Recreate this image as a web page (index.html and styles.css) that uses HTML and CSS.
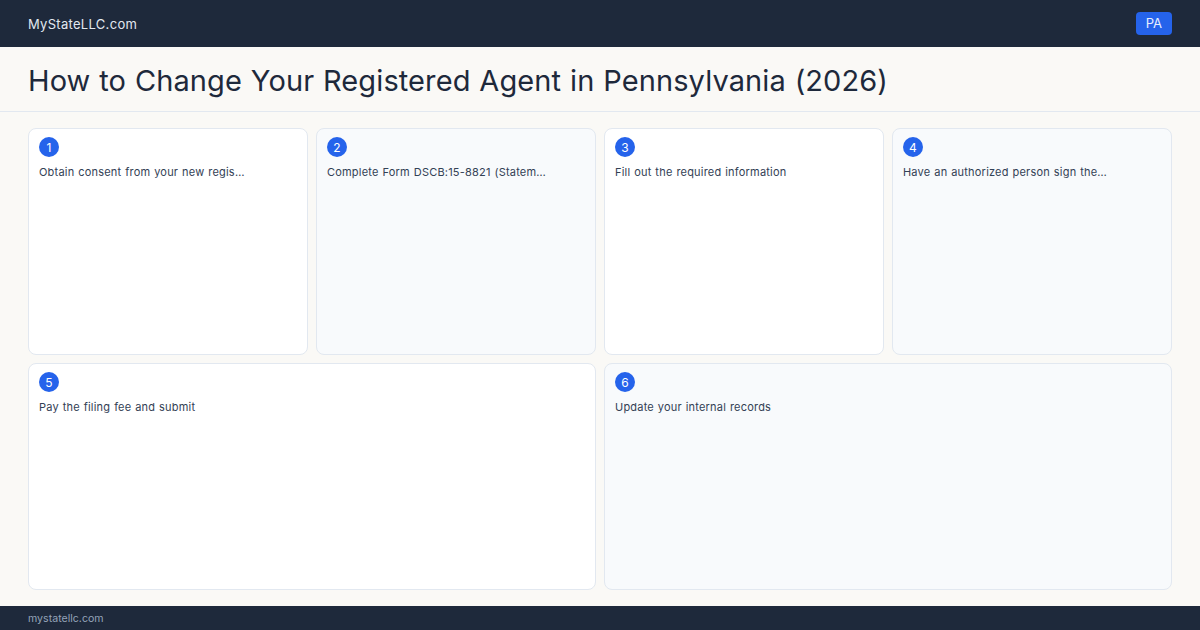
FILE: index.html
```html
<!DOCTYPE html>
<html lang="en">

<head>
    <meta charset="UTF-8">
    <meta name="viewport" content="width=device-width, initial-scale=1.0">
    <title>Change Registered Agent - Pennsylvania</title>
    <link rel="stylesheet" href="styles.css">
</head>

<body>
    <div class="page">
        <header class="topbar">
            <span class="brand">MyStateLLC.com</span>
            <span class="state-badge">PA</span>
        </header>
        <div class="title-bar">
            <h1>How to Change Your Registered Agent in Pennsylvania (2026)</h1>
        </div>
        <main class="steps">
            <div class="step">
                <span class="num">1</span>
                <p>Obtain consent from your new regis…</p>
            </div>
            <div class="step alt">
                <span class="num">2</span>
                <p>Complete Form DSCB:15-8821 (Statem…</p>
            </div>
            <div class="step">
                <span class="num">3</span>
                <p>Fill out the required information</p>
            </div>
            <div class="step alt">
                <span class="num">4</span>
                <p>Have an authorized person sign the…</p>
            </div>
            <div class="step wide">
                <span class="num">5</span>
                <p>Pay the filing fee and submit</p>
            </div>
            <div class="step wide alt">
                <span class="num">6</span>
                <p>Update your internal records</p>
            </div>
        </main>
        <footer class="footer">mystatellc.com</footer>
    </div>
</body>

</html>
```

FILE: styles.css
```css
body {
    margin: 0;
    background-color: #faf9f6;
    font-family: Inter, 'Liberation Sans', sans-serif;
}

.page {
    height: 630px;
    display: flex;
    flex-direction: column;
}

.topbar {
    height: 47px;
    background-color: #1e293b;
    display: flex;
    align-items: center;
    justify-content: space-between;
    padding: 0 28px;
    flex-shrink: 0;
}

.brand {
    color: #e2e8f0;
    font-size: 13px;
    letter-spacing: 0.3px;
}

.state-badge {
    background-color: #2563eb;
    color: #e8efff;
    font-size: 13px;
    border-radius: 4px;
    padding: 4px 10px;
    line-height: 15px;
}

.title-bar {
    height: 65px;
    box-sizing: border-box;
    border-bottom: 1px solid #e2e8f0;
    display: flex;
    align-items: center;
    padding: 2px 28px 0;
    flex-shrink: 0;
}

h1 {
    margin: 0;
    font-size: 29px;
    font-weight: 400;
    color: #1e293b;
    letter-spacing: 0.1px;
    word-spacing: 0.6px;
}

.steps {
    flex-grow: 1;
    display: grid;
    grid-template-columns: repeat(4, 1fr);
    grid-template-rows: 1fr 1fr;
    gap: 8px;
    padding: 16px 28px;
}

.step {
    background-color: #fff;
    border: 1px solid #e2e8f0;
    border-radius: 8px;
    padding: 8px 10px;
}

.step.alt {
    background-color: #f8fafc;
}

.step.wide {
    grid-column: span 2;
}

.num {
    display: flex;
    align-items: center;
    justify-content: center;
    width: 20px;
    height: 20px;
    border-radius: 50%;
    background-color: #2563eb;
    color: #fff;
    font-size: 12px;
}

.step p {
    margin: 8px 0 0;
    font-size: 11px;
    color: #334155;
    letter-spacing: 0.2px;
    word-spacing: 0.6px;
}

.footer {
    height: 24px;
    background-color: #1e293b;
    color: #94a3b8;
    font-size: 10.6px;
    display: flex;
    align-items: center;
    padding: 0 28px;
    flex-shrink: 0;
}
```
